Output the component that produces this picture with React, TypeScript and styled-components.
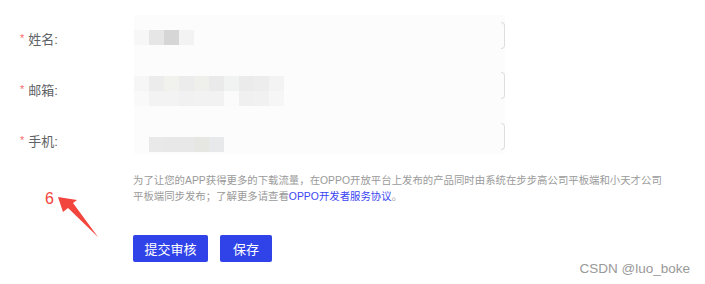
import React from "react";
import styled, { createGlobalStyle } from "styled-components";

const Global = createGlobalStyle`
  html, body { margin: 0; padding: 0; background: #ffffff; }
  body { font-family: "Liberation Sans", "Noto Sans CJK SC", sans-serif; }
`;

const Page = styled.div`
  position: relative;
  width: 705px;
  height: 284px;
  overflow: hidden;
  background: #fff;
`;

const Form = styled.div`
  display: flex;
  flex-direction: column;
  padding-top: 15px;
`;

const Row = styled.div<{ h: number }>`
  display: grid;
  grid-template-columns: 134px 371px;
  height: ${(p) => p.h}px;
`;

const Label = styled.div<{ top: number }>`
  display: flex;
  align-items: center;
  padding-left: 20px;
  padding-top: ${(p) => p.top}px;
  align-self: start;
  height: 20px;
  font-size: 13px;
  color: #606266;
`;

const Star = styled.span`
  color: #f56c6c;
  font-size: 11px;
  margin-right: 4px;
`;

const Field = styled.div`
  position: relative;
  background: #fcfcfc;
`;

const Bracket = styled.div<{ top: number }>`
  position: absolute;
  right: 0;
  top: ${(p) => p.top}px;
  width: 4px;
  height: 27px;
  border: 1px solid #dedede;
  border-left: none;
  border-radius: 0 4px 4px 0;
  box-sizing: border-box;
`;

const Mosaic = styled.div<{ x: number; y: number }>`
  position: absolute;
  left: ${(p) => p.x}px;
  top: ${(p) => p.y}px;
  display: grid;
  grid-auto-flow: row;
`;

const MosaicRow = styled.div`
  display: flex;
`;

const Tile = styled.div<{ c: string }>`
  width: 15px;
  height: 15px;
  background: ${(p) => p.c};
`;

const Tip = styled.div`
  margin: 19px 0 0 133px;
  font-size: 10.4px;
  line-height: 16px;
  color: #9a9a9a;
  white-space: nowrap;
`;

const Link = styled.a`
  color: #3b45f2;
  text-decoration: none;
`;

const Actions = styled.div`
  display: flex;
  gap: 12px;
  margin: 30px 0 0 133px;
`;

const Button = styled.button<{ w: number }>`
  width: ${(p) => p.w}px;
  height: 27px;
  border: none;
  border-radius: 2px;
  background: #2f43e8;
  color: #fff;
  font-family: "Noto Sans CJK SC", sans-serif;
  font-size: 13px;
  padding: 0;
  cursor: pointer;
`;

const Watermark = styled.div`
  position: absolute;
  right: 15px;
  bottom: 8px;
  font-size: 13.5px;
  color: #999;
  font-family: "Liberation Sans", sans-serif;
`;

const Note = styled.div`
  position: absolute;
  left: 45px;
  top: 190px;
  font-size: 16px;
  color: #f2453d;
  font-family: "Liberation Sans", sans-serif;
`;

const ArrowSvg = styled.svg`
  position: absolute;
  left: 0;
  top: 0;
`;

const mosaics: { x: number; y: number; rows: string[][] }[] = [
  { x: 0, y: 15, rows: [["#f7f7f7", "#e6e6e6", "#d6d6d6", "#f3f3f3"]] },
  {
    x: 0,
    y: 10,
    rows: [
      ["#f6f6f6", "#ececec", "#f1f1ee", "#ececec", "#efefec", "#eaeaea", "#f1f2f2", "#ebebeb", "#ededed", "#f3f3f3"],
      ["#f9f9f9", "#f3f3f3", "#f3f3f3", "#f1f1f1", "#f2f2f2", "#f2f2f2", "#fbfbfb", "#f0f0f0", "#f1f1f1", "#f6f6f6"],
    ],
  },
  { x: 15, y: 20, rows: [["#e9e9e9", "#e8e8e8", "#e8e8e8", "#e6e6e3", "#e8e9eb"]] },
];

const fields = [
  { label: "姓名", h: 51, top: 13 },
  { label: "邮箱", h: 51, top: 13 },
  { label: "手机", h: 37, top: 13 },
];

export default function App() {
  return (
    <Page>
      <Global />
      <Form>
        {fields.map((f, i) => (
          <Row key={f.label} h={f.h}>
            <Label top={f.top}>
              <Star>*</Star>
              {f.label}:
            </Label>
            <Field>
              <Mosaic x={mosaics[i].x} y={mosaics[i].y}>
                {mosaics[i].rows.map((r, ri) => (
                  <MosaicRow key={ri}>
                    {r.map((c, ci) => (
                      <Tile key={ci} c={c} />
                    ))}
                  </MosaicRow>
                ))}
              </Mosaic>
              <Bracket top={i === 0 ? 7 : 6} />
            </Field>
          </Row>
        ))}
      </Form>
      <Tip>
        为了让您的APP获得更多的下载流量，在OPPO开放平台上发布的产品同时由系统在步步高公司平板端和小天才公司
        <br />
        平板端同步发布；了解更多请查看<Link>OPPO开发者服务协议</Link>。
      </Tip>
      <Actions>
        <Button w={75}>提交审核</Button>
        <Button w={52}>保存</Button>
      </Actions>
      <Note>6</Note>
      <ArrowSvg width="120" height="260" viewBox="0 0 120 260">
        <polygon
          points="58,197 63,212 68,208 98,237 73,203 77,200"
          fill="#f2453d"
        />
      </ArrowSvg>
      <Watermark>CSDN @luo_boke</Watermark>
    </Page>
  );
}
